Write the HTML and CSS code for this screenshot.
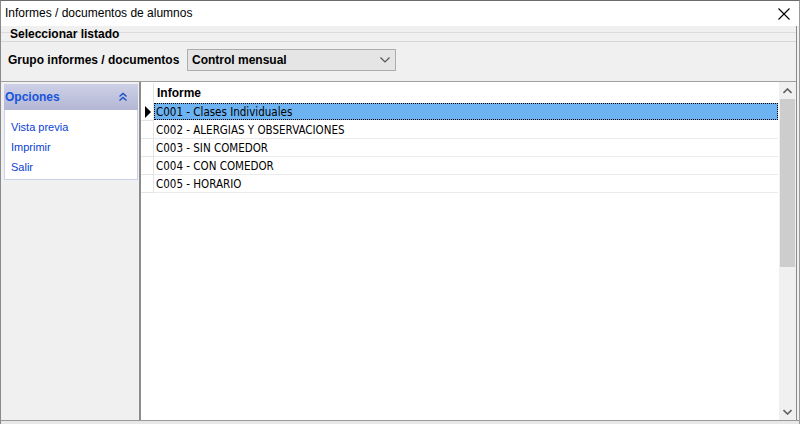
FILE: index.html
```html
<!DOCTYPE html>
<html lang="es">
<head>
    <meta charset="UTF-8">
    <title>Informes / documentos de alumnos</title>
    <link rel="stylesheet" href="styles.css">
</head>
<body>
    <div class="window">
        <div class="titlebar">
            <span class="title">Informes / documentos de alumnos</span>
            <svg class="close" width="12" height="12" viewBox="0 0 12 12">
                <path d="M0.5 0.5 L11.5 11.5 M11.5 0.5 L0.5 11.5" stroke="#000" stroke-width="1.1" fill="none"/>
            </svg>
        </div>

        <div class="content">
            <div class="section-head">Seleccionar listado</div>

            <div class="filter">
                <label class="filter-label">Grupo informes / documentos</label>
                <div class="select">
                    <span>Control mensual</span>
                    <svg width="10" height="6" viewBox="0 0 10 6">
                        <path d="M0.5 0.5 L5 5 L9.5 0.5" stroke="#555" stroke-width="1.2" fill="none"/>
                    </svg>
                </div>
            </div>

            <div class="main">
                <div class="sidebar">
                    <div class="panel">
                        <div class="panel-head">
                            <span>Opciones</span>
                            <svg width="10" height="10" viewBox="0 0 10 10">
                                <path d="M1.5 4.5 L5 1.5 L8.5 4.5 M1.5 8.5 L5 5.5 L8.5 8.5" stroke="#1a4fc8" stroke-width="1.4" fill="none"/>
                            </svg>
                        </div>
                        <ul class="panel-links">
                            <li>Vista previa</li>
                            <li>Imprimir</li>
                            <li>Salir</li>
                        </ul>
                    </div>
                </div>

                <div class="grid">
                    <div class="grid-body">
                        <div class="row header">
                            <div class="indicator"></div>
                            <div class="cell">Informe</div>
                        </div>
                        <div class="row selected">
                            <div class="indicator"><span class="arrow"></span></div>
                            <div class="cell">C001 - Clases Individuales</div>
                        </div>
                        <div class="row">
                            <div class="indicator"></div>
                            <div class="cell">C002 - ALERGIAS Y OBSERVACIONES</div>
                        </div>
                        <div class="row">
                            <div class="indicator"></div>
                            <div class="cell">C003 - SIN COMEDOR</div>
                        </div>
                        <div class="row">
                            <div class="indicator"></div>
                            <div class="cell">C004 - CON COMEDOR</div>
                        </div>
                        <div class="row">
                            <div class="indicator"></div>
                            <div class="cell">C005 - HORARIO</div>
                        </div>
                    </div>
                    <div class="scrollbar">
                        <div class="sb-btn">
                            <svg width="9" height="6" viewBox="0 0 9 6"><path d="M0.5 5 L4.5 1 L8.5 5" stroke="#606060" stroke-width="1.6" fill="none"/></svg>
                        </div>
                        <div class="sb-thumb"></div>
                        <div class="sb-track"></div>
                        <div class="sb-btn">
                            <svg width="9" height="6" viewBox="0 0 9 6"><path d="M0.5 1 L4.5 5 L8.5 1" stroke="#606060" stroke-width="1.6" fill="none"/></svg>
                        </div>
                    </div>
                </div>
            </div>
        </div>
        <div class="footer"></div>
    </div>
</body>
</html>
```

FILE: styles.css
```css
body {
    margin: 0;
    width: 800px;
    height: 424px;
    overflow: hidden;
    background-color: #f0f0f0;
    font-family: "Liberation Sans", Arial, sans-serif;
    font-size: 11px;
    color: #000;
}

.window {
    height: 424px;
    display: flex;
    flex-direction: column;
    border-top: 1px solid #6b6b6b;
    border-left: 1px solid #8a8a8a;
    border-right: 1px solid #9a9a9a;
    box-sizing: border-box;
}

.titlebar {
    height: 25px;
    background-color: #fff;
    display: flex;
    align-items: center;
    justify-content: space-between;
    padding: 0 9px 0 4px;
    flex-shrink: 0;
}

.title {
    font-family: "Liberation Sans", Arial, sans-serif;
    font-size: 12px;
    margin-top: -1px;
}

.close {
    margin-top: 1px;
}

.content {
    flex: 1;
    display: flex;
    flex-direction: column;
    min-height: 0;
    margin-right: 2px;
    border-right: 1px solid #8a8a8a;
}

.section-head {
    height: 16px;
    flex-shrink: 0;
    font-weight: bold;
    font-size: 12px;
    line-height: 14px;
    padding: 1px 0 0 9px;
    box-sizing: border-box;
    border-bottom: 1px solid #d6d6d6;
    background: linear-gradient(to bottom, transparent 6px, #dcdcdc 6px, #dcdcdc 7px, transparent 7px);
}

.filter {
    height: 39px;
    box-sizing: border-box;
    flex-shrink: 0;
    display: flex;
    align-items: center;
    padding: 0 0 4px 7px;
}

.filter-label {
    font-weight: bold;
    font-size: 12px;
    width: 179px;
}

.select {
    width: 209px;
    height: 22px;
    box-sizing: border-box;
    border: 1px solid #adadad;
    background-color: #e5e5e5;
    display: flex;
    align-items: center;
    justify-content: space-between;
    padding: 0 5px 0 4px;
    font-weight: bold;
    font-size: 12px;
}

.main {
    flex: 1;
    display: flex;
    border-top: 1px solid #a0a0a0;
    min-height: 0;
}

.sidebar {
    width: 135px;
    flex-shrink: 0;
    background-color: #f0f0f0;
    border-right: 2px solid #8c8c8c;
    padding: 2px 0 0 3px;
}

.panel {
    width: 134px;
}

.panel-head {
    height: 26px;
    box-sizing: border-box;
    background: linear-gradient(to bottom, #cdd0e7, #b3b7d4);
    display: flex;
    align-items: center;
    justify-content: space-between;
    padding: 0 10px 0 1px;
    font-weight: bold;
    font-size: 12px;
    color: #1654dc;
}

.panel-links {
    list-style: none;
    margin: 0;
    padding: 9px 0 0 6px;
    background-color: #fff;
    border: 1px solid #c9d2ea;
    border-top: none;
    font-family: "Liberation Sans", Arial, sans-serif;
    font-size: 11px;
    color: #0a3fd4;
}

.panel-links li {
    height: 20px;
    line-height: 16px;
}

.grid {
    flex: 1;
    display: flex;
    background-color: #fff;
}

.grid-body {
    flex: 1;
    padding-top: 1px;
}

.row {
    display: flex;
    height: 18px;
}

.row.header {
    height: 20px;
    font-weight: bold;
    font-size: 12px;
}

.indicator {
    width: 13px;
    box-sizing: border-box;
    border-right: 1px solid #e4e4e4;
    border-bottom: 1px solid #e4e4e4;
    display: flex;
    align-items: center;
    padding-left: 4px;
    flex-shrink: 0;
}

.row.header .indicator {
    border-bottom: none;
}

.arrow {
    width: 0;
    height: 0;
    border-top: 6px solid transparent;
    border-bottom: 6px solid transparent;
    border-left: 6px solid #000;
}

.cell {
    flex: 1;
    display: flex;
    align-items: center;
    padding-left: 2px;
    border-bottom: 1px solid #ebebeb;
    margin-right: 1px;
    font-family: "DejaVu Sans Condensed", "DejaVu Sans", sans-serif;
    font-size: 11.5px;
}

.row.header .cell {
    font-family: "Liberation Sans", Arial, sans-serif;
    font-size: 12px;
    padding-left: 3px;
    border-bottom: none;
}

.row.selected .cell {
    background-color: #6db3f2;
    outline: 1px dotted #000;
    outline-offset: -1px;
    border-bottom: none;
    height: 17px;
}

.scrollbar {
    width: 17px;
    background-color: #f0f0f0;
    display: flex;
    flex-direction: column;
}

.sb-btn {
    height: 17px;
    display: flex;
    align-items: center;
    justify-content: center;
    flex-shrink: 0;
}

.sb-thumb {
    height: 168px;
    background-color: #cdcdcd;
    margin: 0 1px;
}

.sb-track {
    flex: 1;
}

.footer {
    height: 3px;
    border-top: 1px solid #9a9a9a;
    background-color: #e8e8e8;
    flex-shrink: 0;
}
```
